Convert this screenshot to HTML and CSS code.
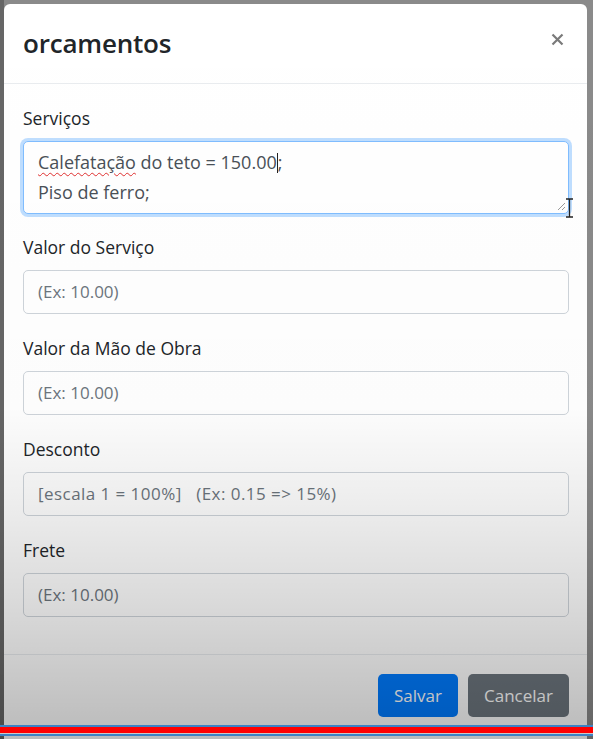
FILE: index.html
```html
<!DOCTYPE html>
<html lang="pt">
<head>
<meta charset="utf-8">
<title>orcamentos</title>
<link rel="stylesheet" href="styles.css">
</head>
<body>
<div class="screen">
  <div class="modal">
    <div class="modal-header">
      <h5 class="modal-title">orcamentos</h5>
      <button class="close" type="button" aria-label="Fechar">
        <svg width="13" height="13" viewBox="0 0 13 13"><path d="M1.5 1.5 L11.5 11.5 M11.5 1.5 L1.5 11.5" stroke="#7a7a7a" stroke-width="2.2" fill="none"/></svg>
      </button>
    </div>
    <div class="modal-body">
      <div class="form-group first">
        <label class="label">Serviços</label>
        <div class="form-control textarea focus">
          <div class="line"><span class="typo">Calefatação</span> do teto = 150.00<span class="caret"></span>;</div>
          <div class="line">Piso de ferro;</div>
          <svg class="grip" width="10" height="10" viewBox="0 0 10 10"><path d="M9 2 L2 9 M9 6 L6 9" stroke="#9a9a9a" stroke-width="1" fill="none"/></svg>
          <svg class="ibeam" width="9" height="20" viewBox="0 0 9 20"><path d="M1 1 H8 M4.5 1 V19 M1 19 H8" stroke="#222" stroke-width="1.3" fill="none"/></svg>
        </div>
      </div>
      <div class="form-group">
        <label class="label">Valor do Serviço</label>
        <div class="form-control input"><span class="ph">(Ex: 10.00)</span></div>
      </div>
      <div class="form-group">
        <label class="label">Valor da Mão de Obra</label>
        <div class="form-control input"><span class="ph">(Ex: 10.00)</span></div>
      </div>
      <div class="form-group">
        <label class="label">Desconto</label>
        <div class="form-control input"><span class="ph pre wide">[escala 1 = 100%]   (Ex: 0.15 =&gt; 15%)</span></div>
      </div>
      <div class="form-group">
        <label class="label">Frete</label>
        <div class="form-control input"><span class="ph">(Ex: 10.00)</span></div>
      </div>
    </div>
    <div class="modal-footer">
      <button class="btn btn-primary" type="button">Salvar</button>
      <button class="btn btn-secondary" type="button">Cancelar</button>
    </div>
  </div>
  <div class="shade"></div>
  <div class="tape"></div>
</div>
</body>
</html>
```
FILE: styles.css
```css
* { box-sizing: border-box; }
html, body { margin: 0; padding: 0; }
body {
  font-family: "Open Sans", "Noto Sans", sans-serif;
  background: #5a5a5a;
}
.screen {
  position: relative;
  width: 593px;
  height: 739px;
  overflow: hidden;
  background: linear-gradient(to right, #666 0, #666 4px, #8a8a8a 4px);
}
.modal {
  margin: 4px 6px 0 4px;
  width: 583px;
  height: 760px;
  background: #fff;
  border-radius: 6px 6px 0 0;
  display: flex;
  flex-direction: column;
}
.modal-header {
  display: flex;
  align-items: center;
  justify-content: space-between;
  height: 80px;
  padding: 0 23px 2px 19px;
  border-bottom: 1px solid #e9ecef;
}
.modal-title {
  margin: 0;
  font-size: 26px;
  font-weight: 600;
  color: #212529;
  letter-spacing: -0.2px;
}
.close {
  border: 0;
  background: none;
  padding: 0;
  line-height: 0;
  margin-top: -6px;
}
.modal-body {
  padding: 20px 18px 0 19px;
  border-bottom: 1px solid #e9ecef;
}
.form-group { margin-bottom: 20px; }
.form-group.first { margin-bottom: 19px; }
.form-group:last-child { margin-bottom: 37px; }
.label {
  display: block;
  font-size: 17.5px;
  line-height: 28px;
  color: #212529;
  margin-bottom: 9px;
}
.form-control {
  position: relative;
  border: 1px solid #ced4da;
  border-radius: 5px;
  background: #fff;
  font-size: 17px;
  color: #495057;
}
.input {
  height: 44px;
  line-height: 42px;
  padding: 0 14px;
}
.ph { color: #6c757d; }
.pre { white-space: pre; }
.wide { letter-spacing: 0.45px; }
.textarea {
  height: 73px;
  padding: 5px 14px;
  font-size: 18px;
  line-height: 30px;
}
.focus {
  border-color: #80bdff;
  box-shadow: 0 0 0 3px rgba(0, 123, 255, 0.25);
}
.typo {
  text-decoration: underline wavy #e03030;
  text-decoration-thickness: 1px;
  text-underline-offset: 3px;
}
.caret {
  display: inline-block;
  width: 1px;
  height: 20px;
  background: #222;
  vertical-align: -4px;
}
.grip { position: absolute; right: 2px; bottom: 2px; }
.ibeam { position: absolute; right: -6px; bottom: -5px; }
.modal-footer {
  display: flex;
  justify-content: flex-end;
  gap: 10px;
  padding: 19px 18px;
}
.btn {
  height: 43px;
  border: 0;
  border-radius: 5px;
  font-family: "Open Sans", "Noto Sans", sans-serif;
  font-size: 17px;
  color: #fff;
  padding: 0 15px;
}
.btn-primary { background: #007bff; width: 80px; }
.btn-secondary { background: #6c757d; width: 101px; }
.shade {
  position: absolute;
  inset: 0;
  pointer-events: none;
  background: linear-gradient(to bottom,
    rgba(0,0,0,0) 0%,
    rgba(0,0,0,0.01) 55%,
    rgba(0,0,0,0.07) 68%,
    rgba(0,0,0,0.15) 82%,
    rgba(0,0,0,0.27) 100%);
}
.tape {
  position: absolute;
  left: 0;
  right: 0;
  top: 725px;
  height: 11px;
  background: linear-gradient(to bottom,
    #3b82c4 0, #3b82c4 2px,
    #ff0000 2px, #ff0000 8px,
    #c9c9c9 8px, #c9c9c9 9px,
    #3b82c4 9px, #3b82c4 11px);
}
```
